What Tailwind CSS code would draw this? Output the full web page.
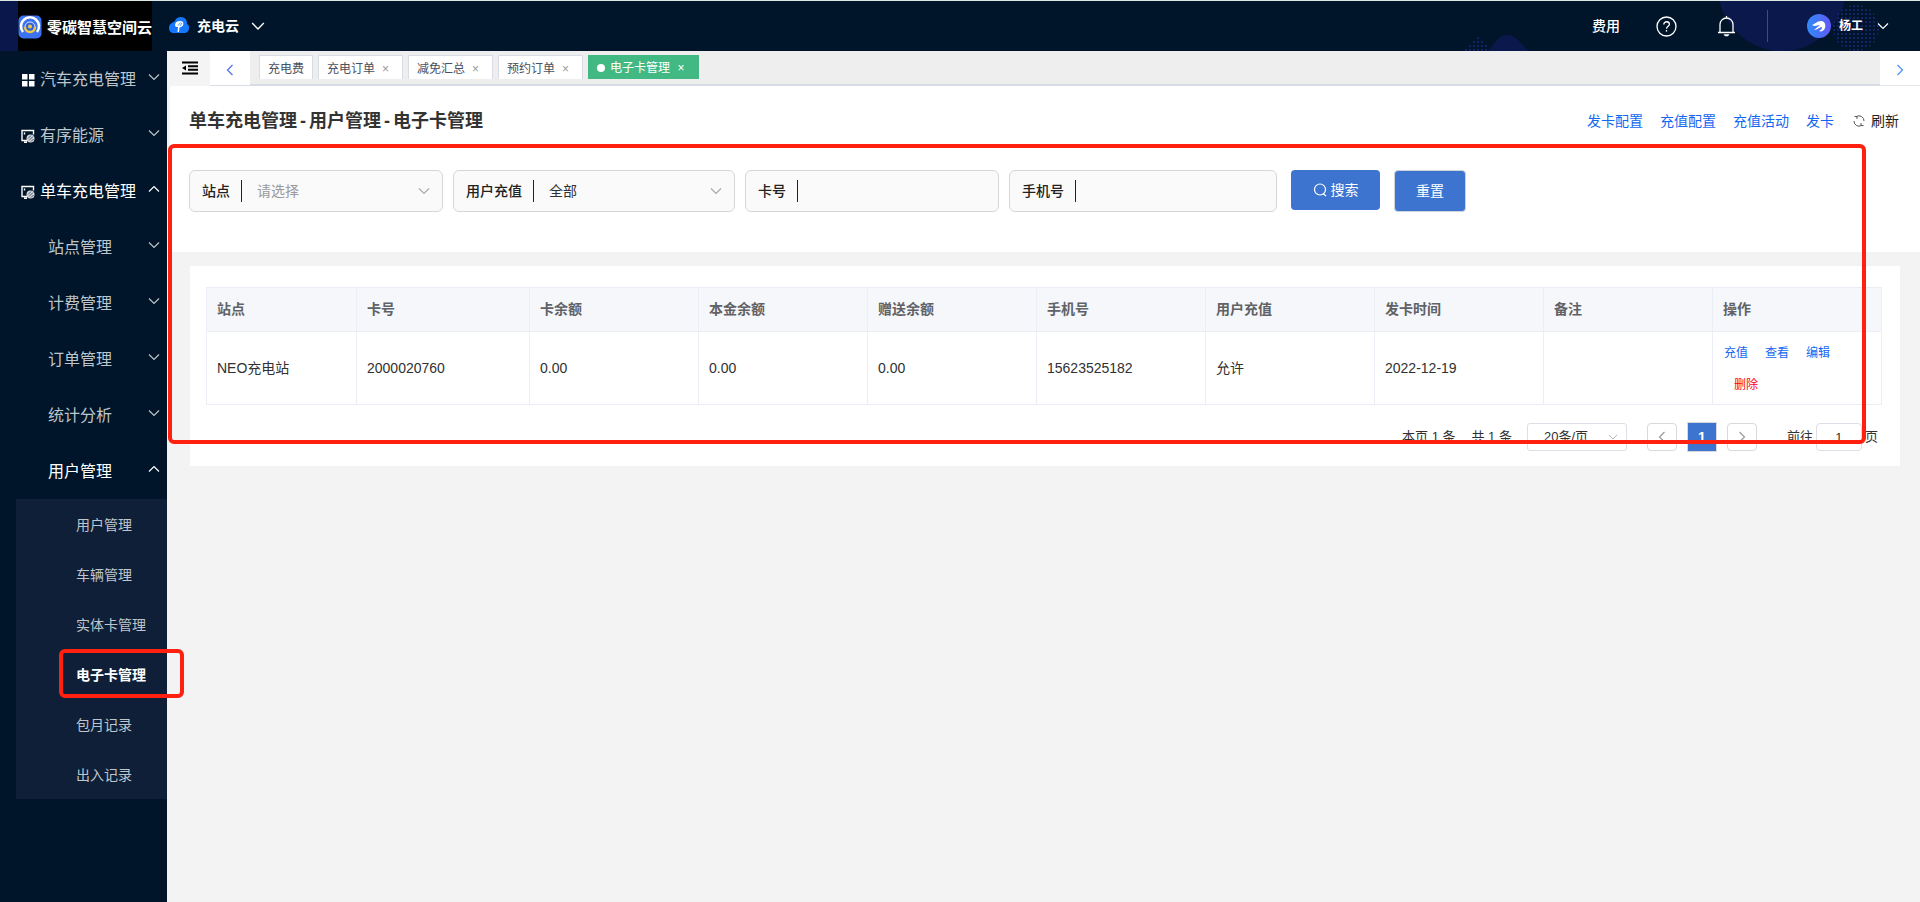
<!DOCTYPE html>
<html lang="zh-CN">
<head>
<meta charset="utf-8">
<title>电子卡管理</title>
<script src="https://cdn.jsdelivr.net/npm/@tailwindcss/browser@4"></script>
</head>
<body class="flex min-h-screen flex-col bg-[#f3f3f3] font-['Liberation_Sans','Noto_Sans_CJK_SC',sans-serif] text-sm text-[#303133]">
<svg class="hidden">
  <symbol id="down" viewBox="0 0 12 12"><path d="M1 3.5l5 5 5-5" fill="none" stroke="currentColor" stroke-width="1.2"/></symbol>
  <symbol id="up" viewBox="0 0 12 12"><path d="M1 8.5l5-5 5 5" fill="none" stroke="currentColor" stroke-width="1.2"/></symbol>
  <symbol id="left" viewBox="0 0 12 12"><path d="M8.500 1l-5 5 5 5" fill="none" stroke="currentColor" stroke-width="1.2"/></symbol>
  <symbol id="right" viewBox="0 0 12 12"><path d="M3.500 1l5 5-5 5" fill="none" stroke="currentColor" stroke-width="1.2"/></symbol>
  <symbol id="screen" viewBox="0 0 14 14"><path d="M6 11.500H1v-10h11.500v4M3 13.300h3M3.500 3.500v2" fill="none" stroke="#fff" stroke-width="1.400"/><circle cx="9.500" cy="9.500" r="4" fill="#d5d9df"/><path d="M7 9.500l3-3M8 11.500l4-4M10 12.500l2.500-2.500" stroke="#00152a" stroke-width=".7"/></symbol>
</svg>

<header class="relative flex h-[51px] shrink-0 items-stretch border-t border-[#dfe6e6] bg-[#001529] text-white">
  <svg class="absolute top-0 right-0 h-[50px] w-[480px]" viewBox="0 1 480 50" aria-hidden="true">
    <defs><pattern id="dots" width="4" height="4" patternUnits="userSpaceOnUse"><rect width="2" height="2" x="1" y="1" fill="#15236b"/></pattern></defs>
    <circle cx="342" cy="-13" r="64" fill="#0a184c"/>
    <path d="M47 51C56 44 57 35 67 35s13 9 22 16z" fill="#0a184c"/>
    <path d="M24 51l14-14 12 10-4 4z" fill="url(#dots)"/>
    <circle cx="416" cy="28" r="23" fill="url(#dots)"/>
  </svg>
  <div class="w-[18px] bg-[#0a174b]"></div>
  <div class="flex w-[134px] items-center gap-[5px] overflow-hidden bg-black pt-0.5">
    <svg class="size-6 shrink-0" viewBox="0 0 24 24"><rect width="23" height="23" x=".5" y=".5" rx="5" fill="#3d73f3"/><path d="M5 17a9 9 0 1 1 14 0" fill="none" stroke="#fff" stroke-width="2.500"/><circle cx="12" cy="12" r="5" fill="#2f62dd" stroke="#dfe9ff" stroke-width="1"/><path d="M7 12a5 5 0 0 0 10 0" fill="none" stroke="#f0c647" stroke-width="2.500"/><circle cx="12" cy="11.500" r="2" fill="#f0c647"/></svg>
    <span class="shrink-0 pt-0.5 text-[15px] font-bold">零碳智慧空间云</span>
  </div>
  <button class="ml-[17px] flex items-center gap-2">
    <svg class="h-5 w-5" viewBox="0 0 20 20"><path d="M6 5C7 2 9 1 12 1c4 0 6 3 6 7 2 1 2 2 2 4 0 3-2 5-5 5H5c-3 0-5-2-5-5 0-4 3-5 6-7z" fill="#1677ff"/><path d="M7 11c-2-2-.5-6 3.500-6l3 .5c1.500 1.500 1 4.500-1.500 5.500l-1.500.5L10 16H8.500L9 11z" fill="#fff"/><path d="M9 9.500l2.500-3M11 10l2-3" stroke="#1677ff" stroke-width=".8"/></svg>
    <span class="text-sm font-bold">充电云</span>
    <svg class="ml-1 size-3.5"><use href="#down"/></svg>
  </button>
  <div class="relative ml-auto flex items-center pr-[31px]">
    <a href="#" class="text-sm font-medium">费用</a>
    <button class="ml-9" aria-label="帮助"><svg class="size-[21px]" viewBox="0 0 21 21" fill="none" stroke="#fff" stroke-width="1.300"><circle cx="10.500" cy="10.500" r="9.500"/><path d="M7.800 8.500c0-3.800 5.600-3.500 5.600-.2 0 2-2.900 2-2.900 4.500"/><path d="M10.500 14v1.600"/></svg></button>
    <button class="ml-10" aria-label="通知"><svg class="h-[21px] w-[19px]" viewBox="0 0 19 21" fill="none" stroke="#fff" stroke-width="1.300"><path d="M1 16.500h17M3 16.500V8.500a6.500 6.500 0 0 1 13 0v8M9.500 2V0"/><path d="M6.500 18.200h6l-1.500 2h-3z" fill="#fff" stroke="none"/></svg></button>
    <div class="ml-[31px] h-8 w-px bg-[#454b73]"></div>
    <button class="ml-[39px] flex items-center">
      <svg class="size-6" viewBox="0 0 24 24"><defs><linearGradient id="av"><stop stop-color="#2f8bf8"/><stop offset="1" stop-color="#6258f5"/></linearGradient></defs><circle cx="12" cy="12" r="12" fill="url(#av)"/><path d="M5 11c3-1 5-4 9-4 4 0 5 4 4 7-1 3-4 4-6 3 2-1 3-2 3-4-3 0-4 3-8 3 2-2 4-3 6-5-3 0-5 2-8 0z" fill="#fff"/></svg>
      <span class="ml-2 text-xs font-bold">杨工</span>
      <svg class="ml-3.5 size-3"><use href="#down"/></svg>
    </button>
  </div>
</header>

<div class="flex grow">
  <nav class="w-[167px] shrink-0 bg-[#001529] text-base text-[#bfc5cc]">
    <a href="#" class="flex h-14 items-center pt-0.5 pr-[7px] pl-[21px]"><svg class="mr-[5px] size-[14px]" viewBox="0 0 14 14" fill="#fff"><path d="M1 1h5.500v5.500H1zM8 1h5.500v5.500H8zM1 8h5.500v5.500H1zM8 8h5.500v5.500H8z"/></svg>汽车充电管理<svg class="mb-1.5 ml-auto size-3"><use href="#down"/></svg></a>
    <a href="#" class="flex h-14 items-center pt-0.5 pr-[7px] pl-[21px]"><svg class="mr-[5px] size-[14px]"><use href="#screen"/></svg>有序能源<svg class="mb-1.5 ml-auto size-3"><use href="#down"/></svg></a>
    <a href="#" class="flex h-14 items-center pt-0.5 pr-[7px] pl-[21px] text-white"><svg class="mr-[5px] size-[14px]"><use href="#screen"/></svg>单车充电管理<svg class="mb-1.5 ml-auto size-3"><use href="#up"/></svg></a>
    <a href="#" class="flex h-14 items-center pt-0.5 pr-[7px] pl-12">站点管理<svg class="mb-1.5 ml-auto size-3"><use href="#down"/></svg></a>
    <a href="#" class="flex h-14 items-center pt-0.5 pr-[7px] pl-12">计费管理<svg class="mb-1.5 ml-auto size-3"><use href="#down"/></svg></a>
    <a href="#" class="flex h-14 items-center pt-0.5 pr-[7px] pl-12">订单管理<svg class="mb-1.5 ml-auto size-3"><use href="#down"/></svg></a>
    <a href="#" class="flex h-14 items-center pt-0.5 pr-[7px] pl-12">统计分析<svg class="mb-1.5 ml-auto size-3"><use href="#down"/></svg></a>
    <a href="#" class="flex h-14 items-center pt-0.5 pr-[7px] pl-12 text-white">用户管理<svg class="mb-1.5 ml-auto size-3"><use href="#up"/></svg></a>
    <div class="ml-4 bg-[#0f1f38] text-sm">
      <a href="#" class="flex h-[50px] items-center pt-0.5 pl-[60px]">用户管理</a>
      <a href="#" class="flex h-[50px] items-center pt-0.5 pl-[60px]">车辆管理</a>
      <a href="#" class="flex h-[50px] items-center pt-0.5 pl-[60px]">实体卡管理</a>
      <a href="#" class="relative flex h-[50px] items-center pt-0.5 pl-[60px] font-bold text-white">电子卡管理
        <span class="absolute top-0 left-[43px] h-[49px] w-[125px] rounded-md border-4 border-[#ff2010]"></span>
      </a>
      <a href="#" class="flex h-[50px] items-center pt-0.5 pl-[60px]">包月记录</a>
      <a href="#" class="flex h-[50px] items-center pt-0.5 pl-[60px]">出入记录</a>
    </div>
  </nav>

  <main class="relative min-w-0 grow">
    <div class="flex h-[35px] bg-[#eeeeee] text-xs text-[#495060]">
      <button class="flex w-[43px] items-center justify-center bg-[#f4f4f4] pl-0.5" aria-label="收起菜单"><svg class="mb-0.5 h-[14px] w-4" viewBox="0 0 16 14"><path d="M0 1.500h16M6 5.200h10M6 8.800h10M0 12.500h16" stroke="#000" stroke-width="2"/><path d="M0 7l4-2.500v5z"/></svg></button>
      <button class="flex w-10 items-center justify-center border-b border-[#d8dce5] bg-white pt-1 text-[#4a72f5]" aria-label="向左"><svg class="size-3"><use href="#left"/></svg></button>
      <div class="flex grow items-start gap-[5px] border-b-2 border-[#d8dce5] pt-1 pl-[9px]">
        <a href="#" class="flex h-6 items-center border border-b-0 border-[#d8dce5] bg-white px-2 pt-0.5">充电费</a>
        <a href="#" class="flex h-6 items-center border border-b-0 border-[#d8dce5] bg-white px-2 pt-0.5">充电订单<span class="w-[19px] pl-0.5 text-center text-[#999]">×</span></a>
        <a href="#" class="flex h-6 items-center border border-b-0 border-[#d8dce5] bg-white px-2 pt-0.5">减免汇总<span class="w-[19px] pl-0.5 text-center text-[#999]">×</span></a>
        <a href="#" class="flex h-6 items-center border border-b-0 border-[#d8dce5] bg-white px-2 pt-0.5">预约订单<span class="w-[19px] pl-0.5 text-center text-[#999]">×</span></a>
        <a href="#" class="flex h-6 items-center bg-[#42b983] px-[9px] pt-0.5 text-white"><i class="mr-[5px] size-2 rounded-full bg-white"></i>电子卡管理<span class="w-5 pl-0.5 text-center">×</span></a>
      </div>
      <button class="flex w-10 items-center justify-center border-b border-[#e4e6ec] bg-white pt-1 text-[#4a90f5]" aria-label="向右"><svg class="size-3"><use href="#right"/></svg></button>
    </div>

    <section class="ml-[3px] h-[166px] bg-white pr-[21px] pl-[19px]">
      <div class="flex h-[68px] items-center pt-0.5">
        <h1 class="flex gap-[3px] text-lg font-bold text-[#333]"><span>单车充电管理</span><span>-</span><span>用户管理</span><span>-</span><span>电子卡管理</span></h1>
        <div class="ml-auto flex items-center gap-[17px] text-[#1467f0]">
          <a href="#">发卡配置</a><a href="#">充值配置</a><a href="#">充值活动</a><a href="#">发卡</a>
          <button class="ml-0.5 flex items-center gap-1.5 text-[#222]"><svg class="size-3" viewBox="0 0 12 12" fill="none" stroke="#555"><path d="M3.500 1.500a5 5 0 0 1 7.500 4.500M1.500 1.500h2.500v2.500M8.500 10.500A5 5 0 0 1 1 6M10.500 10.500H8V8"/></svg>刷新</button>
        </div>
      </div>
      <form class="mt-4 flex items-start gap-2.5">
        <div class="flex h-[42px] w-[254px] items-center rounded-md border border-[#d6d6d6] bg-[#fafafa] px-3">
          <label for="site" class="shrink-0 font-medium text-[#222]">站点</label><i class="ml-[11px] h-[22px] w-px bg-[#222]"></i>
          <select id="site" class="ml-[15px] min-w-0 grow appearance-none text-[#999] outline-none"><option>请选择</option></select><svg class="size-3 text-[#aaa]"><use href="#down"/></svg>
        </div>
        <div class="flex h-[42px] w-[282px] items-center rounded-md border border-[#d6d6d6] bg-[#fafafa] px-3">
          <label for="recharge" class="shrink-0 font-medium text-[#222]">用户充值</label><i class="ml-[11px] h-[22px] w-px bg-[#222]"></i>
          <select id="recharge" class="ml-[15px] min-w-0 grow appearance-none outline-none"><option>全部</option></select><svg class="size-3 text-[#aaa]"><use href="#down"/></svg>
        </div>
        <div class="flex h-[42px] w-[254px] items-center rounded-md border border-[#d6d6d6] bg-[#fafafa] px-3">
          <label for="card" class="shrink-0 font-medium text-[#222]">卡号</label><i class="ml-[11px] h-[22px] w-px shrink-0 bg-[#222]"></i>
          <input id="card" type="text" class="ml-[15px] w-0 min-w-0 grow outline-none">
        </div>
        <div class="flex h-[42px] w-[268px] items-center rounded-md border border-[#d6d6d6] bg-[#fafafa] px-3">
          <label for="phone" class="shrink-0 font-medium text-[#222]">手机号</label><i class="ml-[11px] h-[22px] w-px shrink-0 bg-[#222]"></i>
          <input id="phone" type="text" class="ml-[15px] w-0 min-w-0 grow outline-none">
        </div>
        <button type="button" class="ml-1 flex h-10 w-[89px] items-center justify-center gap-1 rounded bg-[#3c74d0] text-white"><svg class="size-[14px]" viewBox="0 0 14 14" fill="none" stroke="#fff" stroke-width="1.200"><circle cx="7" cy="6.500" r="5.500"/><path d="M10 10.500l3 2.500"/></svg>搜索</button>
        <button type="button" class="ml-1 h-[42px] w-[72px] rounded border border-[#cfd3da] bg-[#3c74d0] text-white">重置</button>
      </form>
    </section>

    <section class="mt-3.5 mr-5 ml-[23px] h-[200px] bg-white pt-[21px] pr-[18px] pl-4">
      <table class="w-full table-fixed border-collapse text-left">
        <colgroup><col class="w-[150px]"><col class="w-[173px]"><col><col><col><col><col><col><col><col></colgroup>
        <thead class="bg-[#f5f7fa] text-[#606266]">
          <tr class="h-11">
            <th class="border border-[#ebeef5] px-2.5 pb-0.5">站点</th><th class="border border-[#ebeef5] px-2.5 pb-0.5">卡号</th><th class="border border-[#ebeef5] px-2.5 pb-0.5">卡余额</th><th class="border border-[#ebeef5] px-2.5 pb-0.5">本金余额</th><th class="border border-[#ebeef5] px-2.5 pb-0.5">赠送余额</th><th class="border border-[#ebeef5] px-2.5 pb-0.5">手机号</th><th class="border border-[#ebeef5] px-2.5 pb-0.5">用户充值</th><th class="border border-[#ebeef5] px-2.5 pb-0.5">发卡时间</th><th class="border border-[#ebeef5] px-2.5 pb-0.5">备注</th><th class="border border-[#ebeef5] px-2.5 pb-0.5">操作</th>
          </tr>
        </thead>
        <tbody>
          <tr class="h-[73px]">
            <td class="border border-[#ebeef5] px-2.5">NEO充电站</td><td class="border border-[#ebeef5] px-2.5">2000020760</td><td class="border border-[#ebeef5] px-2.5">0.00</td><td class="border border-[#ebeef5] px-2.5">0.00</td><td class="border border-[#ebeef5] px-2.5">0.00</td><td class="border border-[#ebeef5] px-2.5">15623525182</td><td class="border border-[#ebeef5] px-2.5">允许</td><td class="border border-[#ebeef5] px-2.5">2022-12-19</td><td class="border border-[#ebeef5] px-2.5"></td>
            <td class="border border-[#ebeef5] px-[11px] pt-0.5 text-xs leading-8 text-[#1467f0]">
              <div class="flex gap-[17px]"><a href="#">充值</a><a href="#">查看</a><a href="#">编辑</a></div>
              <a href="#" class="ml-2.5 block text-[#ff0018]">删除</a>
            </td>
          </tr>
        </tbody>
      </table>
      <div class="mt-[17px] mr-1 flex items-center justify-end text-[13px]">
        <span>本页 1 条</span><span class="ml-4">共 1 条</span>
        <div class="ml-[15px] flex h-7 w-[100px] items-center rounded-[3px] border border-[#dcdfe6] pr-2 pl-4">
          <select aria-label="每页条数" class="min-w-0 grow appearance-none outline-none"><option>20条/页</option></select><svg class="size-2.5 text-[#b0b4bc]"><use href="#down"/></svg>
        </div>
        <button class="ml-5 flex h-7 w-[30px] items-center justify-center rounded-sm border border-[#d9d9d9] text-[#999]" aria-label="上一页"><svg class="size-3"><use href="#left"/></svg></button>
        <button class="ml-2.5 h-[30px] w-[30px] border border-[#d9d9d9] bg-[#3c74d0] text-sm font-bold text-white">1</button>
        <button class="ml-2.5 flex h-7 w-[30px] items-center justify-center rounded-sm border border-[#d9d9d9] text-[#999]" aria-label="下一页"><svg class="size-3"><use href="#right"/></svg></button>
        <label for="page" class="ml-[30px]">前往</label>
        <input id="page" type="text" value="1" class="mx-[3px] h-7 w-[46px] rounded border border-[#dcdfe6] text-center outline-none"><span>页</span>
      </div>
    </section>

    <div class="pointer-events-none absolute top-[93px] right-[54px] left-px h-[300px] rounded-md border-4 border-[#ff2010]"></div>
  </main>
</div>
</body>
</html>
